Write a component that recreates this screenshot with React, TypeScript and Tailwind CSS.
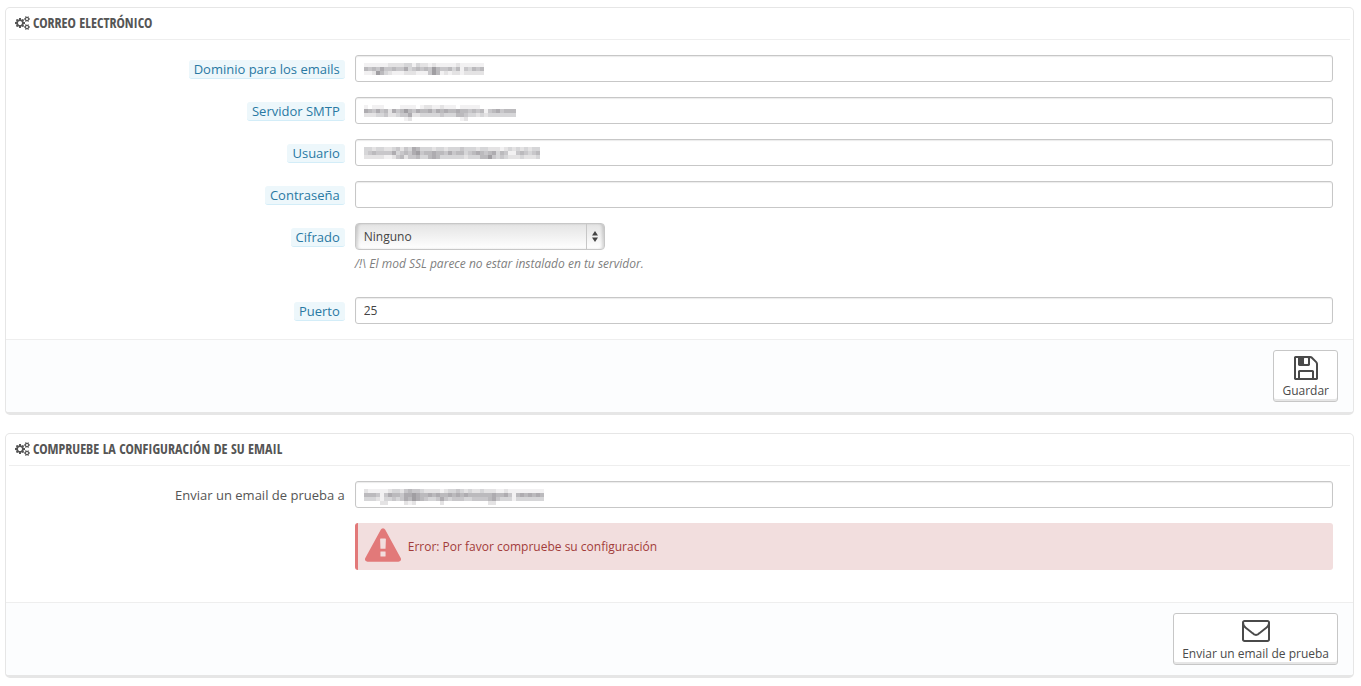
import { useState } from "react";
import type { ReactNode } from "react";

const ICONS = {
  cogs: {
    viewBox: "0 0 1920 1792",
    path: "M896 896q0-106-75-181t-181-75-181 75-75 181 75 181 181 75 181-75 75-181zm768 512q0-52-38-90t-90-38-90 38-38 90q0 53 37.5 90.5t90.5 37.5 90.5-37.5 37.5-90.5zm0-1024q0-52-38-90t-90-38-90 38-38 90q0 53 37.5 90.5t90.5 37.5 90.5-37.5 37.5-90.5zm-384 421v185q0 10-7 19.5t-16 10.5l-155 24q-11 35-32 76 34 48 90 115 7 11 7 20 0 12-7 19-23 30-82.5 89.5t-78.5 59.5q-11 0-21-7l-115-90q-37 19-77 31-11 108-23 155-7 24-30 24h-186q-11 0-20-7.5t-10-17.5l-23-153q-34-10-75-31l-118 89q-7 7-20 7-11 0-21-8-144-133-144-160 0-9 7-19 10-14 41-53t47-61q-23-44-35-82l-152-24q-10-1-17-9.5t-7-19.5v-185q0-10 7-19.5t16-10.5l155-24q11-35 32-76-34-48-90-115-7-11-7-20 0-12 7-20 22-30 82-89t79-59q11 0 21 7l115 90q34-18 77-32 11-108 23-154 7-24 30-24h186q11 0 20 7.5t10 17.5l23 153q34 10 75 31l118-89q8-7 20-7 11 0 21 8 144 133 144 160 0 8-7 19-12 16-42 54t-45 60q23 48 34 82l152 23q10 2 17 10.5t7 19.5zm640 533v140q0 16-149 31-12 27-30 52 51 113 51 138 0 4-4 7-122 71-124 71-8 0-46-47t-52-68q-20 2-30 2t-30-2q-14 21-52 68t-46 47q-2 0-124-71-4-3-4-7 0-25 51-138-18-25-30-52-149-15-149-31v-140q0-16 149-31 13-29 30-52-51-113-51-138 0-4 4-7 4-2 35-20t59-34 30-16q8 0 46 46.5t52 67.5q20-2 30-2t30 2q51-71 92-112l6-2q4 0 124 70 4 3 4 7 0 25-51 138 17 23 30 52 149 15 149 31zm0-1024v140q0 16-149 31-12 27-30 52 51 113 51 138 0 4-4 7-122 71-124 71-8 0-46-47t-52-68q-20 2-30 2t-30-2q-14 21-52 68t-46 47q-2 0-124-71-4-3-4-7 0-25 51-138-18-25-30-52-149-15-149-31v-140q0-16 149-31 13-29 30-52-51-113-51-138 0-4 4-7 4-2 35-20t59-34 30-16q8 0 46 46.5t52 67.5q20-2 30-2t30 2q51-71 92-112l6-2q4 0 124 70 4 3 4 7 0 25-51 138 17 23 30 52 149 15 149 31z",
  },
  save: {
    viewBox: "128 128 1536 1536",
    path: "M512 1536h768v-384h-768v384zm896 0h128v-896q0-14-10-38.5t-20-34.5l-281-281q-10-10-34-20t-39-10v416q0 40-28 68t-68 28h-576q-40 0-68-28t-28-68v-416h-128v1280h128v-416q0-40 28-68t68-28h832q40 0 68 28t28 68v416zm-384-928v-320q0-13-9.5-22.5t-22.5-9.5h-192q-13 0-22.5 9.5t-9.5 22.5v320q0 13 9.5 22.5t22.5 9.5h192q13 0 22.5-9.5t9.5-22.5zm640 32v928q0 40-28 68t-68 28h-1344q-40 0-68-28t-28-68v-1344q0-40 28-68t68-28h928q40 0 88 20t76 48l280 280q28 28 48 76t20 88z",
  },
  envelope: {
    viewBox: "0 256 1792 1408",
    path: "M1664 1504v-768q-32 36-69 66-268 206-426 338-51 43-83 67t-86.5 48.5-102.5 24.5h-2q-48 0-102.5-24.5t-86.5-48.5-83-67q-158-132-426-338-37-30-69-66v768q0 13 9.5 22.5t22.5 9.5h1472q13 0 22.5-9.5t9.5-22.5zm0-1051v-24.5l-.5-13-3-12.5-5.5-9-9-7.5-14-2.5h-1472q-13 0-22.5 9.5t-9.5 22.5q0 168 147 284 193 152 401 317 6 5 35 29.5t46 37.5 44.5 31.5 50.5 27.5 43 9h2q20 0 43-9t50.5-27.5 44.5-31.5 46-37.5 35-29.5q208-165 401-317 54-43 100.5-115.5t46.5-131.5zm128-37v1088q0 66-47 113t-113 47h-1472q-66 0-113-47t-47-113v-1088q0-66 47-113t113-47h1472q66 0 113 47t47 113z",
  },
  warning: {
    viewBox: "0 0 1792 1664",
    path: "M1024 1375v-190q0-14-9.5-23.5t-22.5-9.5h-192q-13 0-22.5 9.5t-9.5 23.5v190q0 14 9.5 23.5t22.5 9.5h192q13 0 22.5-9.5t9.5-23.5zm-2-374l18-459q0-12-10-19-13-11-24-11h-220q-11 0-24 11-10 7-10 21l17 457q0 10 10 16.5t24 6.5h185q14 0 23.5-6.5t10.5-16.5zm-14-934l768 1408q35 63-2 126-17 29-46.5 46t-63.5 17h-1536q-34 0-63.5-17t-46.5-46q-37-63-2-126l768-1408q17-31 47-49t65-18 65 18 47 49z",
  },
};

// One digit per 4px cell, 0 is empty and 9 is the darkest.
const MASKS = {
  domain: [
    "111111222233132212111112111111",
    "545464454463454547544535143545",
    "112753211122211147512122122222",
  ],
  server: [
    "10111000011110122112111011111000000000",
    "65464526457546556465655655454514564555",
    "22233422344622333334333554332323333333",
    "00000000001200000000000012000000000000",
  ],
  user: [
    "33233223424365333233233343332332221232323233",
    "34544446345467455655464553456545635411454345",
    "22222112452445335653333332333557434322232223",
  ],
  testEmail: [
    "211111233245443222212334323223222112111111111",
    "555414655466765565655656565555556556415656565",
    "333213343465765433464344433444456433313333333",
    "000022000021200000020000000000022000000000000",
  ],
};

const inputClass =
  "block h-[27px] w-full rounded-[3px] border border-[#c7c7c7] bg-white px-2 text-xs text-[#444] shadow-[inset_0_1px_1px_rgba(0,0,0,0.08)] outline-none focus:border-[#66afe9]";

function Icon({ name, className }: { name: keyof typeof ICONS; className: string }) {
  return (
    <svg viewBox={ICONS[name].viewBox} className={className} fill="currentColor" aria-hidden="true">
      <path d={ICONS[name].path} />
    </svg>
  );
}

function Mosaic({ rows }: { rows: string[] }) {
  const width = rows[0].length * 4;
  const height = rows.length * 4;

  return (
    <svg
      width={width}
      height={height}
      className="pointer-events-none absolute top-2 left-[9px]"
      shapeRendering="crispEdges"
      aria-hidden="true"
    >
      {rows.map((row, y) =>
        row.split("").map((level, x) => (
          <rect
            key={`${x}-${y}`}
            x={x * 4}
            y={y * 4}
            width={4}
            height={4}
            fill="#55525a"
            fillOpacity={Number(level) * 0.08}
          />
        )),
      )}
    </svg>
  );
}

function Panel({ title, footer, children }: { title: string; footer: ReactNode; children: ReactNode }) {
  return (
    <section className="overflow-hidden rounded-[5px] border border-b-[3px] border-[#e6e6e6] bg-white">
      <h3 className="mx-[3px] flex h-8 items-center gap-[3px] border-b border-[#eee] px-1.5 pb-0.5 font-['Ubuntu_Condensed','Open_Sans_Condensed','Roboto_Condensed',Lato,sans-serif] text-sm text-[#555] uppercase">
        <Icon name="cogs" className="h-3.5 w-[15px]" />
        {title}
      </h3>
      {children}
      <div className="flex justify-end border-t border-[#eee] bg-[#fcfdfe] px-[15px] py-2.5">
        {footer}
      </div>
    </section>
  );
}

function Field({
  id,
  label,
  hint = true,
  children,
}: {
  id: string;
  label: string;
  hint?: boolean;
  children: ReactNode;
}) {
  return (
    <div className="flex">
      <div className="w-1/4 shrink-0 pt-1 pr-[5px] text-right text-[13px] leading-5">
        <label
          htmlFor={id}
          className={
            hint
              ? "inline-block rounded-[3px] border-b border-[#d3edf8] bg-[#edf7fb] px-[5px] leading-[18px] text-[#2979a3]"
              : "text-[#555]"
          }
        >
          {label}
        </label>
      </div>
      <div className="min-w-0 flex-1 pl-[5px]">{children}</div>
    </div>
  );
}

function TextField({
  id,
  type = "text",
  defaultValue,
  mask,
}: {
  id: string;
  type?: string;
  defaultValue?: string;
  mask?: string[];
}) {
  const [masked, setMasked] = useState(Boolean(mask));

  return (
    <div className="relative">
      <input
        id={id}
        type={type}
        defaultValue={defaultValue}
        className={inputClass}
        onChange={() => setMasked(false)}
      />
      {mask && masked ? <Mosaic rows={mask} /> : null}
    </div>
  );
}

function ActionButton({ icon, children }: { icon: ReactNode; children: ReactNode }) {
  return (
    <button
      type="submit"
      className="flex h-[52px] flex-col items-center rounded-[3px] border border-[#c7c7c7] bg-white px-2 text-xs text-[#4a4a4a] shadow-[inset_0_-2px_0_#e6e6e6]"
    >
      <span className="flex h-8 items-center pt-0.5">{icon}</span>
      <span className="leading-4">{children}</span>
    </button>
  );
}

export default function App() {
  return (
    <main className="min-h-screen bg-white px-[5px] pt-[7px] pr-[7px] font-['Open_Sans',sans-serif]">
      <form className="mb-[18px]" onSubmit={(event) => event.preventDefault()}>
        <Panel
          title="Correo electrónico"
          footer={
            <ActionButton icon={<Icon name="save" className="size-6" />}>Guardar</ActionButton>
          }
        >
          <div className="space-y-[15px] py-[15px] pr-5 pl-4">
            <Field id="domain" label="Dominio para los emails">
              <TextField id="domain" mask={MASKS.domain} />
            </Field>
            <Field id="server" label="Servidor SMTP">
              <TextField id="server" mask={MASKS.server} />
            </Field>
            <Field id="user" label="Usuario">
              <TextField id="user" mask={MASKS.user} />
            </Field>
            <Field id="password" label="Contraseña">
              <TextField id="password" type="password" />
            </Field>
            <Field id="encryption" label="Cifrado">
              <div className="relative w-[250px]">
                <select
                  id="encryption"
                  className="block h-[27px] w-full appearance-none rounded-[4px] border border-[#c7c7c7] bg-linear-to-b from-[#e4e4e4] to-white px-2 text-xs text-[#444] shadow-[inset_3px_0_3px_-1px_rgba(0,0,0,0.15),inset_-3px_0_3px_-1px_rgba(0,0,0,0.15)] outline-none"
                >
                  <option>Ninguno</option>
                  <option>TLS</option>
                  <option>SSL</option>
                </select>
                <span className="pointer-events-none absolute inset-y-px right-px flex w-[18px] items-center justify-center border-l border-[#c7c7c7] text-[#444]">
                  <svg width="6" height="11" viewBox="0 0 6 11" fill="currentColor" aria-hidden="true">
                    <path d="M3 0l3 4.5H0zM3 11L0 6.5h6z" />
                  </svg>
                </span>
              </div>
              <p className="mt-1.5 mb-2.5 text-xs leading-4 text-[#808080] italic">
                /!\ El mod SSL parece no estar instalado en tu servidor.
              </p>
            </Field>
            <Field id="port" label="Puerto">
              <TextField id="port" defaultValue="25" />
            </Field>
          </div>
        </Panel>
      </form>

      <form onSubmit={(event) => event.preventDefault()}>
        <Panel
          title="Compruebe la configuración de su email"
          footer={
            <ActionButton icon={<Icon name="envelope" className="h-[22px] w-7" />}>
              Enviar un email de prueba
            </ActionButton>
          }
        >
          <div className="pt-[15px] pr-5 pb-8 pl-4">
            <Field id="test-email" label="Enviar un email de prueba a" hint={false}>
              <TextField id="test-email" mask={MASKS.testEmail} />
              <div
                role="alert"
                className="mt-[15px] flex h-[47px] items-center gap-[7px] rounded-[3px] border-l-[3px] border-[#e27979] bg-[#f2dede] px-[7px] text-xs text-[#a23c3a]"
              >
                <Icon name="warning" className="mb-1 h-[34px] w-9 text-[#e27979]" />
                Error: Por favor compruebe su configuración
              </div>
            </Field>
          </div>
        </Panel>
      </form>
    </main>
  );
}
